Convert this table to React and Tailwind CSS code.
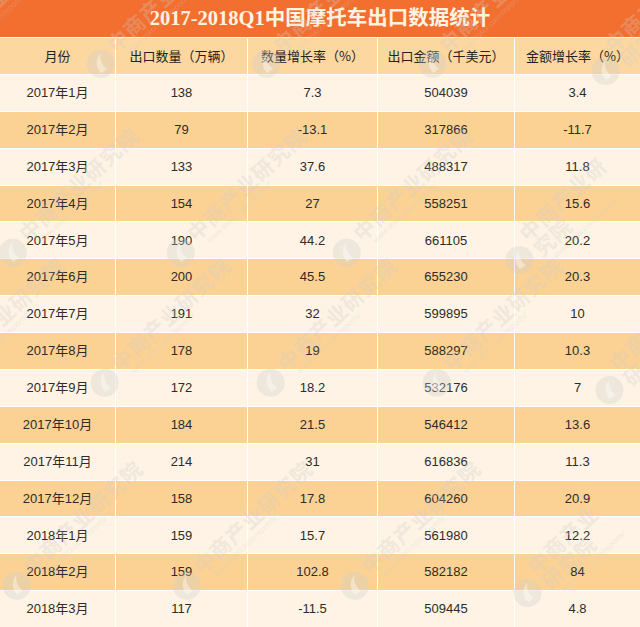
import React from "react";

const rows = [
  ["2017年1月", "138", "7.3", "504039", "3.4"],
  ["2017年2月", "79", "-13.1", "317866", "-11.7"],
  ["2017年3月", "133", "37.6", "488317", "11.8"],
  ["2017年4月", "154", "27", "558251", "15.6"],
  ["2017年5月", "190", "44.2", "661105", "20.2"],
  ["2017年6月", "200", "45.5", "655230", "20.3"],
  ["2017年7月", "191", "32", "599895", "10"],
  ["2017年8月", "178", "19", "588297", "10.3"],
  ["2017年9月", "172", "18.2", "532176", "7"],
  ["2017年10月", "184", "21.5", "546412", "13.6"],
  ["2017年11月", "214", "31", "616836", "11.3"],
  ["2017年12月", "158", "17.8", "604260", "20.9"],
  ["2018年1月", "159", "15.7", "561980", "12.2"],
  ["2018年2月", "159", "102.8", "582182", "84"],
  ["2018年3月", "117", "-11.5", "509445", "4.8"],
];

const headers = [
  "月份",
  "出口数量（万辆）",
  "数量增长率（%）",
  "出口金额（千美元）",
  "金额增长率（%）",
];

const marks = [
  "left-[-81px] top-[48px]",
  "left-[85px] top-[48px]",
  "left-[251px] top-[48px]",
  "left-[417px] top-[48px]",
  "left-[583px] top-[48px]",
  "left-[-3px] top-[237px]",
  "left-[165px] top-[237px]",
  "left-[331px] top-[237px]",
  "left-[497px] top-[237px]",
  "left-[-77px] top-[367px]",
  "left-[89px] top-[367px]",
  "left-[255px] top-[367px]",
  "left-[421px] top-[367px]",
  "left-[587px] top-[367px]",
  "left-[1px] top-[570px]",
  "left-[171px] top-[570px]",
  "left-[339px] top-[570px]",
  "left-[505px] top-[570px]",
];

const bodyFont =
  "font-['Liberation_Sans','Noto_Sans_CJK_SC',sans-serif]";

function Watermark({ pos }) {
  return (
    <div
      className={`absolute ${pos} flex items-center gap-[3px] origin-[15px_15px] -rotate-[43deg] text-[rgba(205,205,205,0.3)]`}
    >
      <svg width="30" height="30" viewBox="0 0 30 30" className="shrink-0">
        <circle cx="15" cy="15" r="14" fill="rgba(205,205,205,0.32)" />
        <path
          d="M9 22 C 9 14, 14 8, 22 7 C 17 11, 15 16, 16 23 Z"
          fill="rgba(255,255,255,0.4)"
        />
      </svg>
      <div className="flex flex-col leading-none">
        <span className="text-[21px] font-bold tracking-[1px] font-['Noto_Sans_CJK_SC',sans-serif]">
          中商产业研究院
        </span>
        <span className="text-[8px] italic mt-[2px] pl-[10px] font-['Liberation_Sans',sans-serif]">
          www.askci.com/reports/
        </span>
      </div>
    </div>
  );
}

export default function App() {
  return (
    <div className="relative w-[640px] h-[627px] overflow-hidden bg-white">
      <div
        className={`grid grid-cols-[115px_131px_129px_136px_1fr] grid-rows-[37px_repeat(16,minmax(0,1fr))] gap-px h-[627px] bg-white text-[13px] text-[#2e2b28] ${bodyFont}`}
      >
        <div className="col-span-5 bg-[#f36f2f] flex items-center justify-center text-[20.5px] font-semibold text-[#fff3e3] font-['Liberation_Serif','Noto_Sans_CJK_SC',serif]">
          2017-2018Q1中国摩托车出口数据统计
        </div>
        {headers.map((h) => (
          <div
            key={h}
            className="bg-[#fcd8a0] flex items-center justify-center font-['Noto_Sans_CJK_SC',sans-serif] text-[#222]"
          >
            {h}
          </div>
        ))}
        {rows.map((r, i) =>
          r.map((c, j) => (
            <div
              key={`${i}-${j}`}
              className={`${
                i % 2 === 0 ? "bg-[#fef3e4]" : "bg-[#fbd294]"
              } flex items-center justify-center`}
            >
              {c}
            </div>
          ))
        )}
      </div>
      <div className="absolute inset-0 pointer-events-none">
        {marks.map((m) => (
          <Watermark key={m} pos={m} />
        ))}
      </div>
    </div>
  );
}
